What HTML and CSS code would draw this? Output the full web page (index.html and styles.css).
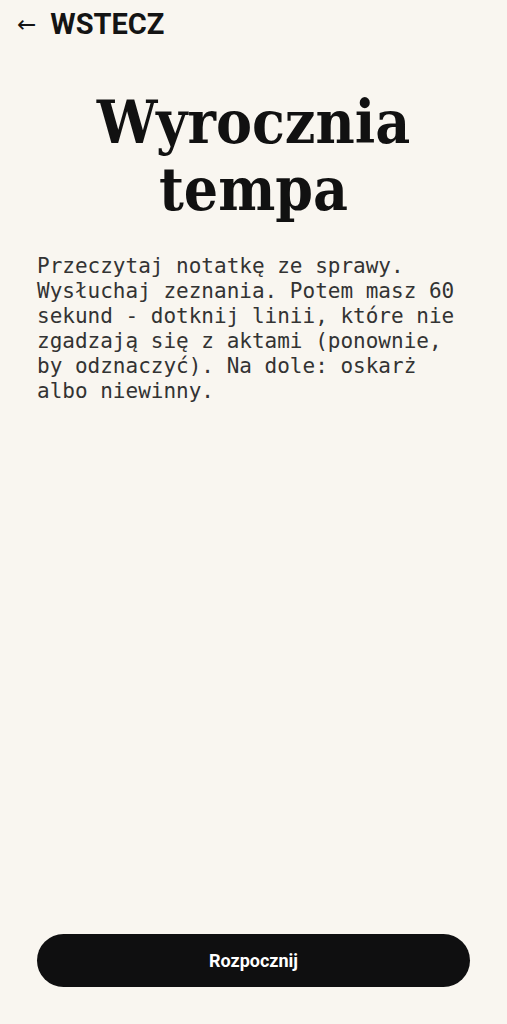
FILE: index.html
```html
<!DOCTYPE html>
<html lang="pl">
<head>
<meta charset="utf-8">
<link rel="stylesheet" href="styles.css">
</head>
<body>
<div class="page">
  <header class="top">
    <button class="back"><span class="arrow">←</span><span class="back-label">WSTECZ</span></button>
  </header>
  <main class="content">
    <h1 class="title">Wyrocznia<br>tempa</h1>
    <p class="intro">Przeczytaj notatkę ze sprawy. Wysłuchaj zeznania. Potem masz 60 sekund - dotknij linii, które nie zgadzają się z aktami (ponownie, by odznaczyć). Na dole: oskarż albo niewinny.</p>
  </main>
  <footer class="bottom">
    <button class="start">Rozpocznij</button>
  </footer>
</div>
</body>
</html>
```
FILE: styles.css
```css
html, body {
  margin: 0;
  padding: 0;
  background: #f9f6f0;
}
.page {
  height: 1024px;
  display: flex;
  flex-direction: column;
  box-sizing: border-box;
}
.top {
  padding: 4px 0 0 17px;
}
.back {
  display: flex;
  align-items: center;
  gap: 14px;
  background: none;
  border: none;
  padding: 0;
  color: #141414;
  height: 40px;
  cursor: pointer;
}
.arrow {
  font-family: "DejaVu Sans", sans-serif;
  font-weight: 400;
  font-size: 23px;
}
.back-label {
  font-family: Roboto, "Liberation Sans", sans-serif;
  font-weight: 700;
  font-size: 29px;
}
.content {
  flex: 1;
  padding: 0 37px;
}
.title {
  margin: 45px 0 0;
  text-align: center;
  font-family: "DejaVu Serif", serif;
  font-stretch: condensed;
  font-weight: 700;
  font-size: 60px;
  line-height: 67px;
  color: #111;
}
.intro {
  margin: 31px 0 0;
  font-family: "DejaVu Sans Mono", monospace;
  font-size: 21px;
  line-height: 25px;
  color: #333;
}
.bottom {
  padding: 0 37px 37px;
}
.start {
  width: 100%;
  height: 53px;
  border: none;
  border-radius: 27px;
  background: #0f0f10;
  color: #fff;
  font-family: Roboto, "Liberation Sans", sans-serif;
  font-weight: 700;
  font-size: 18px;
}
```
